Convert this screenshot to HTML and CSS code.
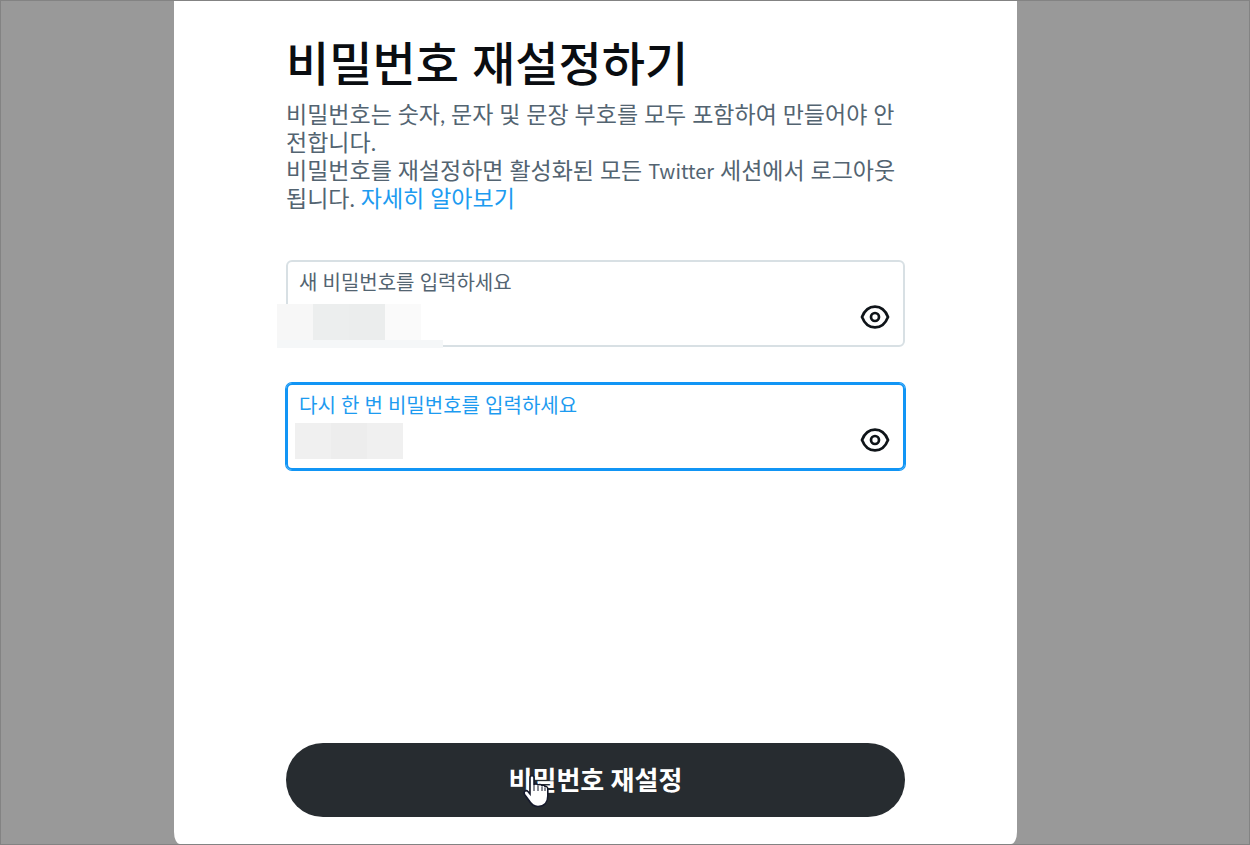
FILE: index.html
```html
<!DOCTYPE html>
<html lang="ko">
<head>
<meta charset="utf-8">
<meta name="viewport" content="width=device-width, initial-scale=1">
<title>비밀번호 재설정하기</title>
<link rel="stylesheet" href="styles.css">
</head>
<body>
<div class="backdrop">
  <main class="dialog">
    <h1 class="title">비밀번호 재설정하기</h1>
    <div class="description">
      <p class="paragraph">비밀번호는 숫자, 문자 및 문장 부호를 모두 포함하여 만들어야 안전합니다.</p>
      <p class="paragraph">비밀번호를 재설정하면 활성화된 모든 <span class="brand">Twitter</span> 세션에서 로그아웃됩니다. <a class="link" href="#">자세히 알아보기</a></p>
    </div>
    <form class="form">
      <div class="field">
        <div class="field-main">
          <label class="field-label" for="new-password">새 비밀번호를 입력하세요</label>
          <input class="field-input" id="new-password" type="password">
        </div>
        <button class="reveal" type="button" aria-label="비밀번호 표시">
          <svg class="eye" viewBox="0 0 30 26" aria-hidden="true"><path d="M2 13C4.600 6.200 9 2.600 15 2.600S25.400 6.200 28 13C25.400 19.800 21 23.400 15 23.400S4.600 19.800 2 13Z"/><circle cx="15" cy="13" r="4"/></svg>
        </button>
        <div class="mask mask-new" aria-hidden="true"><i class="m1"></i><i class="m2"></i><i class="m3"></i><i class="m4"></i><i class="m5"></i></div>
      </div>
      <div class="field field-active">
        <div class="field-main">
          <label class="field-label" for="confirm-password">다시 한 번 비밀번호를 입력하세요</label>
          <input class="field-input" id="confirm-password" type="password">
        </div>
        <button class="reveal" type="button" aria-label="비밀번호 표시">
          <svg class="eye" viewBox="0 0 30 26" aria-hidden="true"><path d="M2 13C4.600 6.200 9 2.600 15 2.600S25.400 6.200 28 13C25.400 19.800 21 23.400 15 23.400S4.600 19.800 2 13Z"/><circle cx="15" cy="13" r="4"/></svg>
        </button>
        <div class="mask mask-confirm" aria-hidden="true"><i class="c1"></i><i class="c2"></i><i class="c1"></i></div>
      </div>
      <button class="submit" type="submit">비밀번호 재설정
        <svg class="pointer" viewBox="0 0 26 34" aria-hidden="true"><path d="M7 3.500C7 1.200 11 1.200 11 3.500V11C11 9.500 15 9.500 15 11.500C15 10 19 10 19 12C19.500 10.800 22 11 22 13C22.500 12 24.800 12.300 24.800 15V22C24.800 28 21.500 32.500 15 32.500C10.500 32.500 8 30 6 26.500L1.600 20.500C0 17.500 3 15.500 5 17.500L7 20Z"/><path class="fingers" d="M11 11V17M15 12V17M19 12.500V17M22 13.500V17"/></svg>
      </button>
    </form>
  </main>
</div>
</body>
</html>
```
FILE: styles.css
```css
* {
  box-sizing: border-box;
}

body {
  margin: 0;
  font-family: Lato, "Noto Sans CJK KR", sans-serif;
  color: #0a0d11;
}

.backdrop {
  display: flex;
  min-height: 100vh;
  padding: 0 232px 0 173px;
  border: 1px solid #838383;
  background: #999;
}

.dialog {
  display: flex;
  flex: 1;
  flex-direction: column;
  min-width: 0;
  padding: 26px 112px 27px;
  border-radius: 0 0 6px 6px / 0 0 12px 12px;
  background: #fff;
}

.title {
  margin: 0;
  font-family: "Noto Sans CJK KR", sans-serif;
  font-size: 47px;
  font-weight: 500;
  line-height: 68px;
}

.description {
  margin-top: 5px;
  font-size: 23px;
  line-height: 28px;
  color: #536471;
  word-break: break-all;
}

.paragraph {
  margin: 0;
}

.brand {
  display: inline-block;
  font-family: "Noto Sans CJK KR", sans-serif;
  font-size: 20px;
  line-height: 20px;
}

.link {
  display: inline-block;
  color: #1d9bf0;
  text-decoration: none;
}

.form {
  display: flex;
  flex: 1;
  flex-direction: column;
  gap: 36px;
  margin-top: 48px;
}

.field {
  position: relative;
  display: flex;
  min-height: 87px;
  padding: 4px 13px 4px 11px;
  border: 2px solid #d8e0e4;
  border-radius: 6px;
}

.field-active {
  border-color: #1195f5;
  box-shadow: 0 0 0 1px #1195f5;
}

.field-main {
  display: flex;
  flex: 1;
  flex-direction: column;
}

.field-label {
  font-size: 20px;
  line-height: 32px;
  color: #536471;
}

.field-active .field-label {
  color: #1d9bf0;
}

.field-input {
  flex: 1;
  width: 100%;
  min-width: 0;
  padding: 0;
  border: 0;
  outline: 0;
  background: transparent;
  font: inherit;
}

.reveal {
  display: flex;
  align-self: flex-end;
  padding: 0;
  margin-bottom: 11px;
  border: 0;
  background: transparent;
}

.eye {
  width: 30px;
  height: 26px;
  fill: none;
  stroke: #0f1419;
  stroke-width: 2.7;
}

.mask {
  position: absolute;
  display: grid;
}

.mask-new {
  left: -11px;
  bottom: -3px;
  grid-template: 36px 8px / 36px 36px 36px 36px 22px;
}

.mask-confirm {
  left: 7px;
  bottom: 9px;
  grid-template: 36px / repeat(3, 36px);
}

.m1 { background: #f7f7f7; }
.m2 { background: #eceeee; }
.m3 { background: #ebeded; }
.m4 { background: #fafafa; }
.m5 { grid-area: 2 / 1 / 3 / 6; background: #f5f7f8; }
.c1 { background: #f0f0f0; }
.c2 { background: #ededed; }

.submit {
  position: relative;
  min-height: 74px;
  margin-top: auto;
  border: 0;
  border-radius: 37px;
  background: #272c30;
  color: #fff;
  font: 700 26px/36px Lato, "Noto Sans CJK KR", sans-serif;
}

.pointer {
  position: absolute;
  top: 31px;
  left: calc(50% - 73px);
  width: 26px;
  height: 34px;
  fill: #fff;
  stroke: #15192b;
  stroke-width: 1.6;
}

.fingers {
  fill: none;
  stroke-width: 1;
}
```
